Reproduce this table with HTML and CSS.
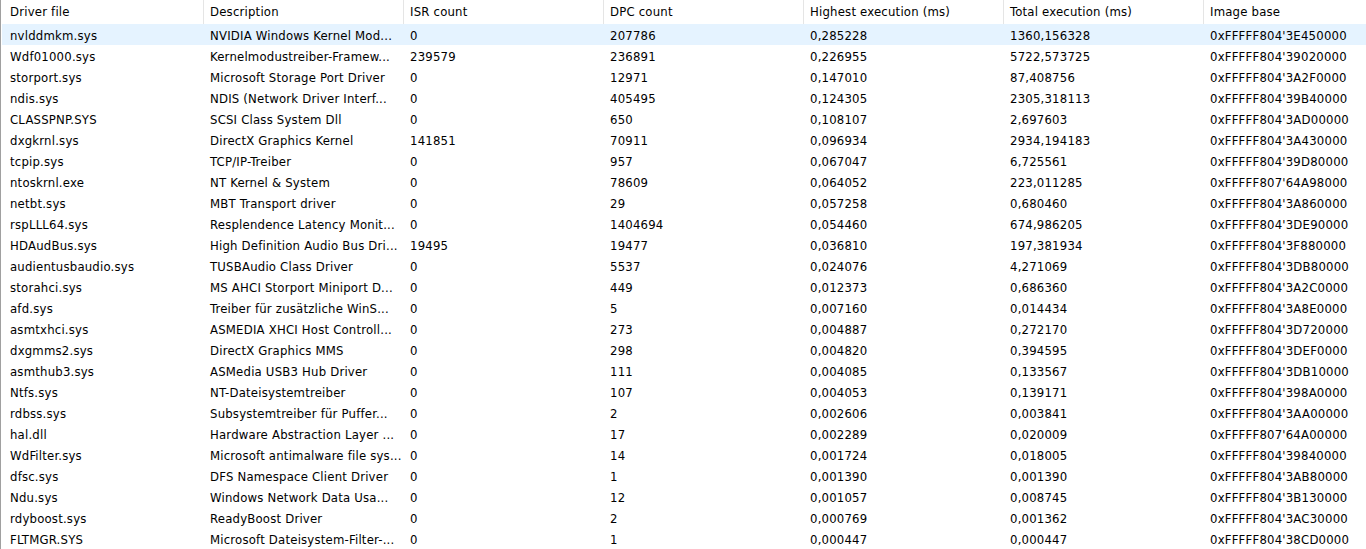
FILE: index.html
```html
<!DOCTYPE html>
<html>
<head>
<meta charset="utf-8">
<link rel="stylesheet" href="styles.css">
</head>
<body>
<div class="list">
  <div class="row head">
    <div class="cell">Driver file</div>
    <div class="cell">Description</div>
    <div class="cell">ISR count</div>
    <div class="cell">DPC count</div>
    <div class="cell">Highest execution (ms)</div>
    <div class="cell">Total execution (ms)</div>
    <div class="cell last">Image base</div>
  </div>
  <div class="row sel"><div class="cell">nvlddmkm.sys</div><div class="cell">NVIDIA Windows Kernel Mod...</div><div class="cell">0</div><div class="cell">207786</div><div class="cell">0,285228</div><div class="cell">1360,156328</div><div class="cell">0xFFFFF804'3E450000</div></div>
  <div class="row"><div class="cell">Wdf01000.sys</div><div class="cell">Kernelmodustreiber-Framew...</div><div class="cell">239579</div><div class="cell">236891</div><div class="cell">0,226955</div><div class="cell">5722,573725</div><div class="cell">0xFFFFF804'39020000</div></div>
  <div class="row"><div class="cell">storport.sys</div><div class="cell">Microsoft Storage Port Driver</div><div class="cell">0</div><div class="cell">12971</div><div class="cell">0,147010</div><div class="cell">87,408756</div><div class="cell">0xFFFFF804'3A2F0000</div></div>
  <div class="row"><div class="cell">ndis.sys</div><div class="cell">NDIS (Network Driver Interf...</div><div class="cell">0</div><div class="cell">405495</div><div class="cell">0,124305</div><div class="cell">2305,318113</div><div class="cell">0xFFFFF804'39B40000</div></div>
  <div class="row"><div class="cell">CLASSPNP.SYS</div><div class="cell">SCSI Class System Dll</div><div class="cell">0</div><div class="cell">650</div><div class="cell">0,108107</div><div class="cell">2,697603</div><div class="cell">0xFFFFF804'3AD00000</div></div>
  <div class="row"><div class="cell">dxgkrnl.sys</div><div class="cell">DirectX Graphics Kernel</div><div class="cell">141851</div><div class="cell">70911</div><div class="cell">0,096934</div><div class="cell">2934,194183</div><div class="cell">0xFFFFF804'3A430000</div></div>
  <div class="row"><div class="cell">tcpip.sys</div><div class="cell">TCP/IP-Treiber</div><div class="cell">0</div><div class="cell">957</div><div class="cell">0,067047</div><div class="cell">6,725561</div><div class="cell">0xFFFFF804'39D80000</div></div>
  <div class="row"><div class="cell">ntoskrnl.exe</div><div class="cell">NT Kernel &amp; System</div><div class="cell">0</div><div class="cell">78609</div><div class="cell">0,064052</div><div class="cell">223,011285</div><div class="cell">0xFFFFF807'64A98000</div></div>
  <div class="row"><div class="cell">netbt.sys</div><div class="cell">MBT Transport driver</div><div class="cell">0</div><div class="cell">29</div><div class="cell">0,057258</div><div class="cell">0,680460</div><div class="cell">0xFFFFF804'3A860000</div></div>
  <div class="row"><div class="cell">rspLLL64.sys</div><div class="cell">Resplendence Latency Monit...</div><div class="cell">0</div><div class="cell">1404694</div><div class="cell">0,054460</div><div class="cell">674,986205</div><div class="cell">0xFFFFF804'3DE90000</div></div>
  <div class="row"><div class="cell">HDAudBus.sys</div><div class="cell">High Definition Audio Bus Dri...</div><div class="cell">19495</div><div class="cell">19477</div><div class="cell">0,036810</div><div class="cell">197,381934</div><div class="cell">0xFFFFF804'3F880000</div></div>
  <div class="row"><div class="cell">audientusbaudio.sys</div><div class="cell">TUSBAudio Class Driver</div><div class="cell">0</div><div class="cell">5537</div><div class="cell">0,024076</div><div class="cell">4,271069</div><div class="cell">0xFFFFF804'3DB80000</div></div>
  <div class="row"><div class="cell">storahci.sys</div><div class="cell">MS AHCI Storport Miniport D...</div><div class="cell">0</div><div class="cell">449</div><div class="cell">0,012373</div><div class="cell">0,686360</div><div class="cell">0xFFFFF804'3A2C0000</div></div>
  <div class="row"><div class="cell">afd.sys</div><div class="cell">Treiber für zusätzliche WinS...</div><div class="cell">0</div><div class="cell">5</div><div class="cell">0,007160</div><div class="cell">0,014434</div><div class="cell">0xFFFFF804'3A8E0000</div></div>
  <div class="row"><div class="cell">asmtxhci.sys</div><div class="cell">ASMEDIA XHCI Host Controll...</div><div class="cell">0</div><div class="cell">273</div><div class="cell">0,004887</div><div class="cell">0,272170</div><div class="cell">0xFFFFF804'3D720000</div></div>
  <div class="row"><div class="cell">dxgmms2.sys</div><div class="cell">DirectX Graphics MMS</div><div class="cell">0</div><div class="cell">298</div><div class="cell">0,004820</div><div class="cell">0,394595</div><div class="cell">0xFFFFF804'3DEF0000</div></div>
  <div class="row"><div class="cell">asmthub3.sys</div><div class="cell">ASMedia USB3 Hub Driver</div><div class="cell">0</div><div class="cell">111</div><div class="cell">0,004085</div><div class="cell">0,133567</div><div class="cell">0xFFFFF804'3DB10000</div></div>
  <div class="row"><div class="cell">Ntfs.sys</div><div class="cell">NT-Dateisystemtreiber</div><div class="cell">0</div><div class="cell">107</div><div class="cell">0,004053</div><div class="cell">0,139171</div><div class="cell">0xFFFFF804'398A0000</div></div>
  <div class="row"><div class="cell">rdbss.sys</div><div class="cell">Subsystemtreiber für Puffer...</div><div class="cell">0</div><div class="cell">2</div><div class="cell">0,002606</div><div class="cell">0,003841</div><div class="cell">0xFFFFF804'3AA00000</div></div>
  <div class="row"><div class="cell">hal.dll</div><div class="cell">Hardware Abstraction Layer ...</div><div class="cell">0</div><div class="cell">17</div><div class="cell">0,002289</div><div class="cell">0,020009</div><div class="cell">0xFFFFF807'64A00000</div></div>
  <div class="row"><div class="cell">WdFilter.sys</div><div class="cell">Microsoft antimalware file sys...</div><div class="cell">0</div><div class="cell">14</div><div class="cell">0,001724</div><div class="cell">0,018005</div><div class="cell">0xFFFFF804'39840000</div></div>
  <div class="row"><div class="cell">dfsc.sys</div><div class="cell">DFS Namespace Client Driver</div><div class="cell">0</div><div class="cell">1</div><div class="cell">0,001390</div><div class="cell">0,001390</div><div class="cell">0xFFFFF804'3AB80000</div></div>
  <div class="row"><div class="cell">Ndu.sys</div><div class="cell">Windows Network Data Usa...</div><div class="cell">0</div><div class="cell">12</div><div class="cell">0,001057</div><div class="cell">0,008745</div><div class="cell">0xFFFFF804'3B130000</div></div>
  <div class="row"><div class="cell">rdyboost.sys</div><div class="cell">ReadyBoost Driver</div><div class="cell">0</div><div class="cell">2</div><div class="cell">0,000769</div><div class="cell">0,001362</div><div class="cell">0xFFFFF804'3AC30000</div></div>
  <div class="row"><div class="cell">FLTMGR.SYS</div><div class="cell">Microsoft Dateisystem-Filter-...</div><div class="cell">0</div><div class="cell">1</div><div class="cell">0,000447</div><div class="cell">0,000447</div><div class="cell">0xFFFFF804'38CD0000</div></div>
</div>
</body>
</html>
```

FILE: styles.css
```css
html, body {
  margin: 0;
  padding: 0;
  background: #ffffff;
}
body {
  font-family: "DejaVu Sans Condensed", "DejaVu Sans", sans-serif;
  font-size: 13px;
  letter-spacing: 0.2px;
  color: #000000;
  overflow: hidden;
}
.list {
  border-left: 1px solid #a0a0a0;
  padding-left: 3px;
  height: 549px;
  box-sizing: border-box;
}
.row {
  display: grid;
  grid-template-columns: repeat(6, 200px) 1fr;
  height: 21px;
  line-height: 21px;
  white-space: nowrap;
}
.row.head {
  height: 24px;
  line-height: 24px;
}
.row.sel {
  background: #e5f3ff;
  margin-left: -2px;
  padding-left: 2px;
}
.cell {
  padding-left: 6px;
  padding-top: 1px;
  overflow: hidden;
}
.head .cell {
  border-right: 1px solid #e5e5e5;
  padding-top: 0;
}
.head .cell.last {
  border-right: none;
}
```
